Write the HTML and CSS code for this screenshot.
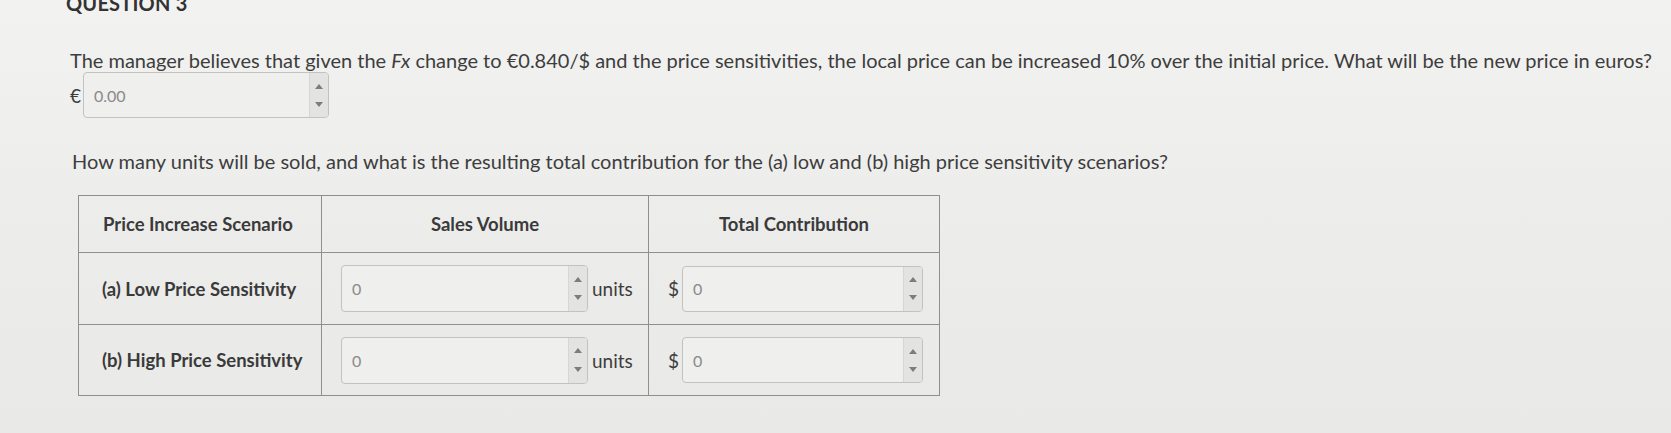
FILE: index.html
```html
<!DOCTYPE html>
<html lang="en">
<head>
<meta charset="utf-8">
<title>Question 3</title>
<link rel="stylesheet" href="styles.css">
</head>
<body>
<div class="page">
  <h2 class="qtitle">QUESTION 3</h2>
  <p class="para first">The manager believes that given the <i>Fx</i> change to €0.840/$ and the price sensitivities, the local price can be increased 10% over the initial price. What will be the new price in euros?</p>
  <div class="euro-row">
    <span class="cur">€</span>
    <div class="spin euro"><span class="val">0.00</span><span class="arrows"><span class="up"></span><span class="down"></span></span></div>
  </div>
  <p class="para second">How many units will be sold, and what is the resulting total contribution for the (a) low and (b) high price sensitivity scenarios?</p>
  <table class="grid">
    <colgroup><col class="c1"><col class="c2"><col class="c3"></colgroup>
    <thead>
      <tr class="head">
        <th class="left">Price Increase Scenario</th>
        <th>Sales Volume</th>
        <th>Total Contribution</th>
      </tr>
    </thead>
    <tbody>
      <tr class="row r1">
        <td class="label">(a) Low Price Sensitivity</td>
        <td><div class="cell-in"><div class="spin vol"><span class="val">0</span><span class="arrows"><span class="up"></span><span class="down"></span></span></div><span class="unit">units</span></div></td>
        <td><div class="cell-in"><span class="cur">$</span><div class="spin tot"><span class="val">0</span><span class="arrows"><span class="up"></span><span class="down"></span></span></div></div></td>
      </tr>
      <tr class="row r2">
        <td class="label">(b) High Price Sensitivity</td>
        <td><div class="cell-in"><div class="spin vol"><span class="val">0</span><span class="arrows"><span class="up"></span><span class="down"></span></span></div><span class="unit">units</span></div></td>
        <td><div class="cell-in"><span class="cur">$</span><div class="spin tot"><span class="val">0</span><span class="arrows"><span class="up"></span><span class="down"></span></span></div></div></td>
      </tr>
    </tbody>
  </table>
</div>
</body>
</html>
```
FILE: styles.css
```css
html, body {
  margin: 0;
  padding: 0;
}
body {
  width: 1671px;
  height: 433px;
  overflow: hidden;
  background: linear-gradient(180deg, #f2f2f1 0%, #ececea 55%, #e9e9e7 100%);
  font-family: Lato, "Open Sans", sans-serif;
  color: #3d3d3d;
}
.page {
  padding-left: 70px;
}
.qtitle {
  margin: -9px 0 0 -4px;
  font-size: 20px;
  line-height: 24px;
  font-weight: 700;
  color: #333;
  letter-spacing: 0.2px;
}
.para {
  margin: 0;
  font-size: 20px;
  line-height: 24px;
  white-space: nowrap;
}
.para.first {
  margin-top: 33px;
}
.para.second {
  margin-top: 31px;
  margin-left: 2px;
}
.euro-row {
  margin-top: 0;
  display: flex;
  align-items: center;
  gap: 2px;
}
.cur {
  font-size: 19px;
  color: #3d3d3d;
}
.spin {
  display: flex;
  align-items: stretch;
  box-sizing: border-box;
  border: 1px solid #c2c2c0;
  border-radius: 4px;
  background: #efefed;
}
.spin.euro {
  width: 246px;
  height: 46px;
}
.spin .val {
  flex: 1;
  display: flex;
  align-items: center;
  padding-left: 10px;
  font-size: 16px;
  color: #8a8a8a;
}
.spin .arrows {
  width: 18px;
  display: flex;
  flex-direction: column;
  justify-content: space-around;
  align-items: center;
  background: #e3e3e1;
  border-left: 1px solid #d6d6d4;
  border-radius: 0 3px 3px 0;
  padding: 4px 0;
}
.spin .up {
  width: 0;
  height: 0;
  border-left: 4px solid transparent;
  border-right: 4px solid transparent;
  border-bottom: 5px solid #7d7d7d;
}
.spin .down {
  width: 0;
  height: 0;
  border-left: 4px solid transparent;
  border-right: 4px solid transparent;
  border-top: 5px solid #7d7d7d;
}
.grid {
  margin-top: 22px;
  margin-left: 8px;
  border-collapse: collapse;
  table-layout: fixed;
  width: 861px;
}
.grid col.c1 { width: 243px; }
.grid col.c2 { width: 327px; }
.grid col.c3 { width: 291px; }
.grid th, .grid td {
  border: 1px solid #8f8f8d;
  padding: 0;
  vertical-align: middle;
}
.grid th {
  height: 56px;
  font-size: 18.5px;
  font-weight: 700;
  color: #3a3a3a;
  text-align: center;
}
.grid th.left {
  text-align: left;
  padding-left: 24px;
}
.grid td.label {
  padding-left: 23px;
  font-size: 18.5px;
  font-weight: 700;
  color: #3a3a3a;
}
.row.r1 td { height: 71px; }
.row.r2 td { height: 70px; }
.cell-in {
  display: flex;
  align-items: center;
  padding-left: 19px;
  gap: 4px;
}
.spin.vol {
  width: 247px;
  height: 47px;
}
.spin.tot {
  width: 241px;
  height: 46px;
  margin-left: -1px;
}
.unit {
  font-size: 19px;
  color: #3d3d3d;
}
.grid .cur {
  font-size: 19px;
}
```
